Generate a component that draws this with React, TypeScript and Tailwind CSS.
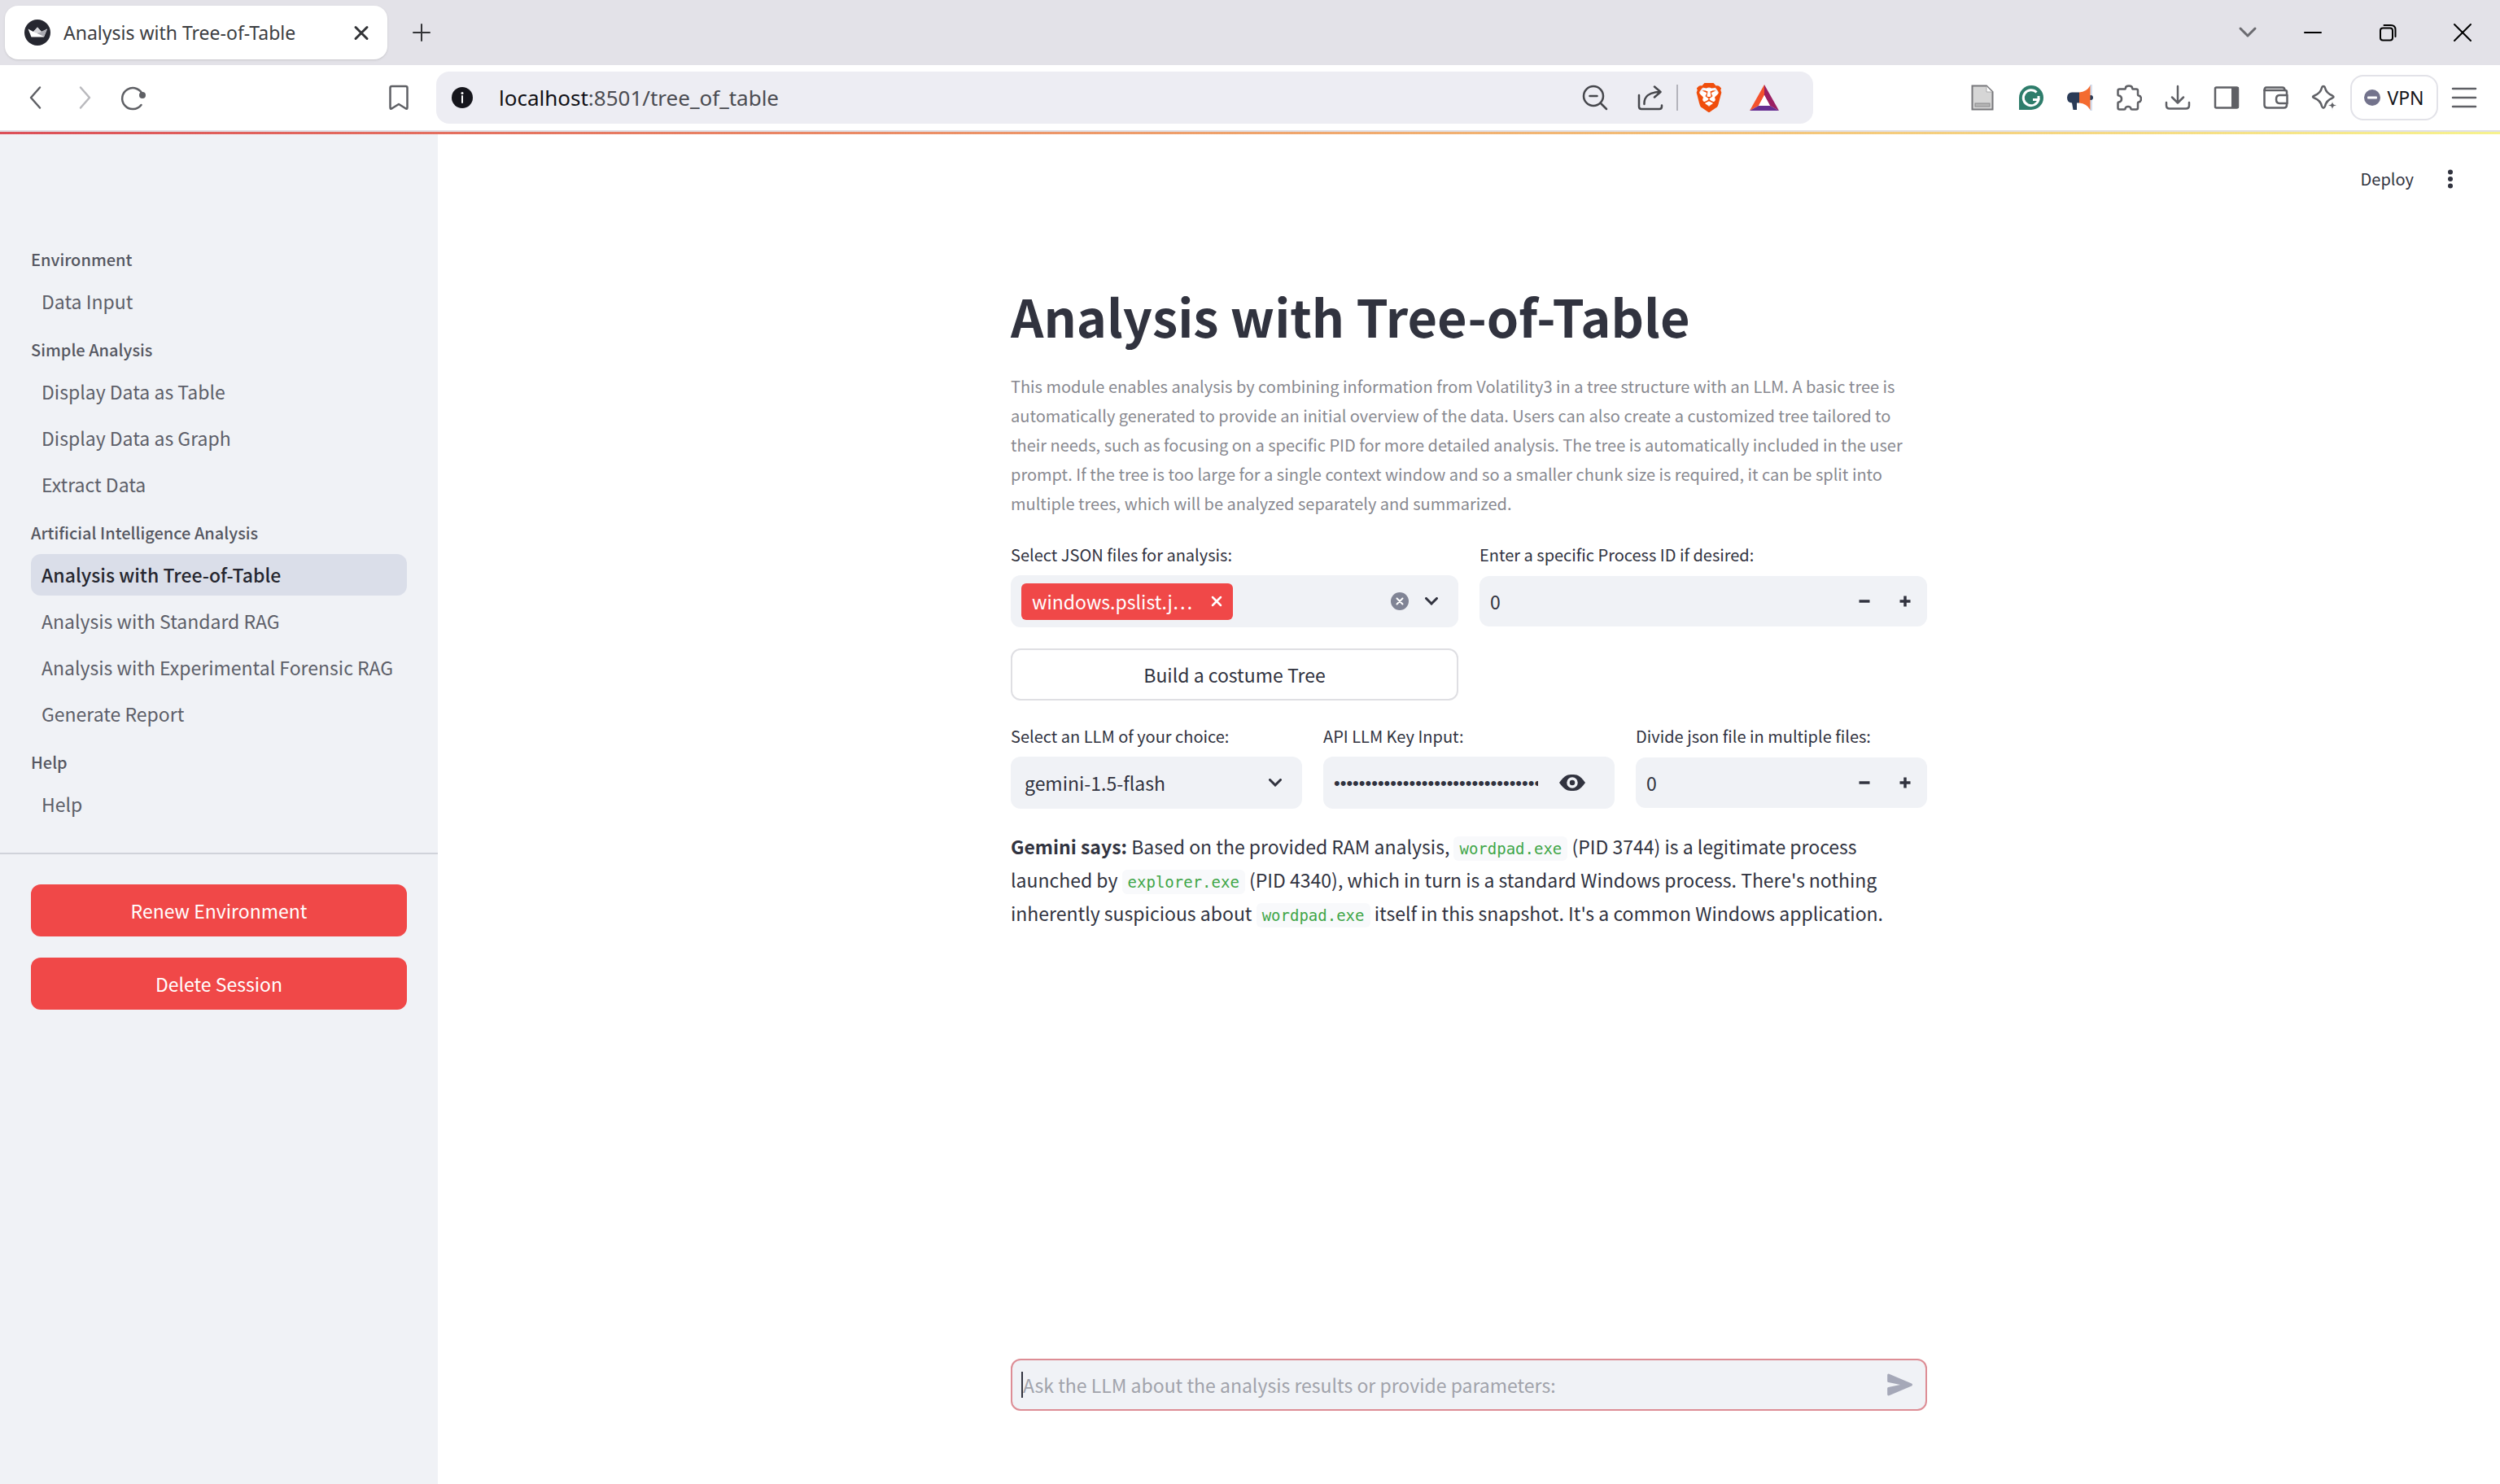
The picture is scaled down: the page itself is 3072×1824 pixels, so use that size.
import type { ReactNode } from "react";
import { SiBrave } from "react-icons/si";

const line = {
  fill: "none",
  stroke: "currentColor",
  strokeWidth: 2.5,
  strokeLinecap: "round" as const,
  strokeLinejoin: "round" as const,
};

function Icon({ children, className = "size-8" }: { children: ReactNode; className?: string }) {
  return (
    <svg viewBox="0 0 32 32" className={`${className} shrink-0`} aria-hidden="true">
      {children}
    </svg>
  );
}

function IconButton({ label, children, className = "" }: { label: string; children: ReactNode; className?: string }) {
  return (
    <button type="button" aria-label={label} className={`flex shrink-0 items-center justify-center ${className}`}>
      {children}
    </button>
  );
}

function TabStrip() {
  return (
    <div className="flex h-20 items-center bg-[#e3e2e8] pl-[6px]">
      <div className="flex h-[66px] w-[470px] items-center rounded-2xl bg-white pr-4 pl-6 shadow-sm">
        <svg viewBox="0 0 32 32" className="size-8 shrink-0" aria-hidden="true">
          <circle cx="16" cy="16" r="16" fill="#262730" />
          <path d="M4.500 11.500 L11 15 L16 9.500 L21 15 L28 11.500 L24 21.500 H8.500 Z" fill="#fff" />
          <path d="M16 9.500 L21 15 L14 16.500 L11 15 Z" fill="#d4d4d8" />
          <path d="M28 11.500 L21 15 L15 16.800 L24 21 Z" fill="#a9a9b0" />
        </svg>
        <span className="ml-4 flex-1 text-[23px] text-[#3c3e42]">Analysis with Tree-of-Table</span>
        <IconButton label="Close tab" className="size-8 text-[#333437]">
          <Icon>
            <path d="M9 9.500 L23 23.500 M23 9.500 L9 23.500" {...line} strokeWidth={3} />
          </Icon>
        </IconButton>
      </div>
      <IconButton label="New tab" className="ml-[26px] size-8 text-[#333437]">
        <Icon>
          <path d="M16 6 V26 M6 16 H26" {...line} strokeWidth={2} />
        </Icon>
      </IconButton>
      <div className="flex-1" />
      <div className="flex items-center gap-[60px] pr-[30px] text-black">
        <IconButton label="Search tabs" className="mr-[-12px] size-8 text-[#6b6b70]">
          <Icon>
            <path d="M7 11 L16 20 L25 11" {...line} strokeWidth={3} />
          </Icon>
        </IconButton>
        <IconButton label="Minimize" className="size-8">
          <Icon>
            <path d="M6 16 H26" {...line} strokeWidth={2} />
          </Icon>
        </IconButton>
        <IconButton label="Restore" className="size-8">
          <Icon>
            <rect x="7" y="10.500" width="15" height="15" rx="3" {...line} strokeWidth={2} />
            <path d="M11.500 7 H20 Q25.500 7 25.500 12.500 V21" {...line} strokeWidth={2} />
          </Icon>
        </IconButton>
        <IconButton label="Close" className="size-8">
          <Icon>
            <path d="M6 6 L26 26 M26 6 L6 26" {...line} strokeWidth={2} />
          </Icon>
        </IconButton>
      </div>
    </div>
  );
}

function Toolbar() {
  return (
    <div className="flex h-20 items-center bg-white pr-7 pl-7 text-[#5f6065]">
      <IconButton label="Back">
        <Icon>
          <path d="M21 3.500 L10 16 L21 28.500" {...line} />
        </Icon>
      </IconButton>
      <IconButton label="Forward" className="ml-7 text-[#b9b9bd]">
        <Icon>
          <path d="M11 3.500 L22 16 L11 28.500" {...line} />
        </Icon>
      </IconButton>
      <IconButton label="Reload" className="ml-7">
        <Icon>
          <path d="M27.500 13 A13 13 0 1 0 25.500 25" {...line} />
          <circle cx="27" cy="13" r="4" fill="currentColor" />
        </Icon>
      </IconButton>
      <div className="flex-1" />
      <IconButton label="Bookmark this page" className="mr-[30px]">
        <Icon>
          <path d="M5.500 4 Q5.500 2 7.500 2 H24.500 Q26.500 2 26.500 4 V28 Q26.500 31 24 29 L16 24 L8 29 Q5.500 31 5.500 28 Z" {...line} />
        </Icon>
      </IconButton>
      <div className="mr-[192px] flex h-16 w-[1692px] items-center rounded-2xl bg-[#ededf3] pr-[42px] pl-[19px] text-[#46474c]">
        <svg viewBox="0 0 26 26" className="size-[26px] shrink-0" aria-hidden="true">
          <circle cx="13" cy="13" r="13" fill="#16161c" />
          <circle cx="13" cy="7.500" r="1.500" fill="#fff" />
          <path d="M13 11 V19" stroke="#fff" strokeWidth="2" strokeLinecap="round" />
        </svg>
        <a href="#tree_of_table" className="ml-8 flex-1 text-[26px] text-[#4b4c52]">
          <span className="text-[#111116]">localhost</span>:8501/tree_of_table
        </a>
        <IconButton label="Zoom out">
          <Icon>
            <circle cx="14" cy="14" r="12" {...line} />
            <path d="M9.500 14 H18.500 M23 23 L30 30" {...line} />
          </Icon>
        </IconButton>
        <IconButton label="Share" className="ml-9">
          <Icon>
            <path d="M2 13 V27 Q2 30 5 30 H27 Q30 30 30 27 V25.500" {...line} />
            <path d="M8.500 24 C8 15 14 9 28 9 M21 2.500 L28.500 9 L21 15.500" {...line} />
          </Icon>
        </IconButton>
        <span className="ml-4 h-8 w-[2px] bg-[#b3b3bb]" />
        <IconButton label="Brave Shields" className="ml-5">
          <span className="relative flex">
            <span className="absolute inset-x-[6px] top-[7px] bottom-[9px] rounded-full bg-white" />
            <SiBrave className="relative size-9 text-[#f04e0c]" />
          </span>
        </IconButton>
        <IconButton label="Brave Rewards" className="ml-8">
          <svg viewBox="0 0 36 32" className="h-8 w-9" aria-hidden="true">
            <path d="M18 0 L0 32 L11 26 L18 13 Z" fill="#f4512c" />
            <path d="M18 0 L36 32 L25 26 L18 13 Z" fill="#9a1f62" />
            <path d="M0 32 H36 L25 26 H11 Z" fill="#662d91" />
            <path d="M18 13 L25 26 H11 Z" fill="#fff" />
          </svg>
        </IconButton>
      </div>
      <div className="flex items-center gap-7">
        <IconButton label="Page extension">
          <Icon>
            <path d="M3.500 1.500 H21 L28.500 9 V30.500 H3.500 Z" fill="#d6d6d6" stroke="#77777a" strokeWidth="2" />
            <path d="M21 2 V9 H28 Z" fill="#fff" stroke="#a9a9ab" />
            <rect x="7" y="23" width="18" height="4" fill="#b5b5b5" stroke="#8a8a8c" />
          </Icon>
        </IconButton>
        <IconButton label="Grammarly">
          <Icon>
            <path d="M1 31 V16 A15 15 0 1 1 16 31 Z" fill="#2e7d6b" />
            <path d="M22.500 9.500 A9.500 9.500 0 1 0 25 18.500 H18 M25 14 V18.500" fill="none" stroke="#fff" strokeWidth="3" />
          </Icon>
        </IconButton>
        <IconButton label="Megaphone extension">
          <Icon>
            <rect x="28" y="0" width="3" height="32" fill="#d6dfee" />
            <circle cx="29" cy="16" r="3" fill="#2a3b57" />
            <path d="M6 9.500 H15 V22.500 H12 V31 H7.500 L6 22.500 Q0 22 0 16 Q0 10 6 9.500 Z" fill="#2a3b57" />
            <path d="M15 9.500 Q24 9 28.500 1 V31 Q24 23 15 22.500 Z" fill="#f46b30" />
          </Icon>
        </IconButton>
        <IconButton label="Extensions">
          <Icon>
            <path
              d="M2.500 7.500 Q2.500 5.500 4.500 5.500 H10.500 Q12 5.500 11.800 4.500 Q12 1.500 16 1.500 Q20 1.500 20.200 4.500 Q20 5.500 21.500 5.500 H25 Q27 5.500 27 7.500 V12 Q27 13.500 28 13.500 Q31 14 31 17.500 Q31 21 28 21.500 Q27 21.500 27 23 V28.500 Q27 30.500 25 30.500 H20 Q18.500 30.500 18.500 29.500 Q18 27 15 27 Q12 27 11.500 29.500 Q11.500 30.500 10 30.500 H4.500 Q2.500 30.500 2.500 28.500 V23 Q2.500 21.500 3.500 21.500 Q7 21 7 17.500 Q7 14 3.500 13.500 Q2.500 13.500 2.500 12 Z"
              {...line}
            />
          </Icon>
        </IconButton>
        <IconButton label="Downloads">
          <Icon>
            <path d="M16 2 V22 M9 15.500 L16 22.500 L23 15.500 M2 22 V25.500 Q2 29.500 6 29.500 H26 Q30 29.500 30 25.500 V22" {...line} />
          </Icon>
        </IconButton>
        <IconButton label="Side panel">
          <Icon>
            <rect x="2" y="3.500" width="28" height="25" rx="1.500" {...line} />
            <rect x="22" y="3" width="9" height="26" fill="currentColor" />
          </Icon>
        </IconButton>
        <IconButton label="Wallet">
          <Icon>
            <path d="M30 13 V9 Q30 7 28 7 H2.500 V25 Q2.500 28.500 6 28.500 H26.500 Q30 28.500 30 25 V23" {...line} />
            <path d="M2.500 7 Q2.500 3.500 5 3.500 H24.500 Q27.500 3.500 27.500 7" {...line} />
            <path d="M30.500 13 H21 Q17 13 17 18 Q17 23 21 23 H30.500 Z" {...line} />
          </Icon>
        </IconButton>
        <IconButton label="Leo AI">
          <Icon>
            <path d="M15 2 Q16.500 2 17 4 Q18.500 10.500 26 13.500 Q29 15 26 16.500 Q18.500 19.500 17 26.500 Q15 31 13 26.500 Q11.500 19.500 4 16.500 Q0 15 4 13.500 Q11.500 10.500 13 4 Q13.500 2 15 2 Z" {...line} />
            <path d="M26 20 L27.500 24 L32 25.500 L27.500 27 L26 31.500 L24.500 27 L20 25.500 L24.500 24 Z" fill="currentColor" stroke="#fff" strokeWidth="1" />
          </Icon>
        </IconButton>
      </div>
      <button type="button" className="ml-4 flex h-14 w-[108px] items-center justify-center gap-2 rounded-2xl border-2 border-[#e2e2e8] text-[23px] text-[#15151a]">
        <svg viewBox="0 0 20 20" className="size-5" aria-hidden="true">
          <circle cx="10" cy="10" r="10" fill="#73738c" />
          <rect x="4" y="8.500" width="12" height="3" rx="1" fill="#fff" />
        </svg>
        VPN
      </button>
      <IconButton label="Menu" className="ml-4">
        <Icon>
          <path d="M2 5 H30 M2 16 H30 M2 27 H30" {...line} />
        </Icon>
      </IconButton>
    </div>
  );
}

const sections = [
  { title: "Environment", items: ["Data Input"] },
  { title: "Simple Analysis", items: ["Display Data as Table", "Display Data as Graph", "Extract Data"] },
  {
    title: "Artificial Intelligence Analysis",
    items: [
      "Analysis with Tree-of-Table",
      "Analysis with Standard RAG",
      "Analysis with Experimental Forensic RAG",
      "Generate Report",
    ],
  },
  { title: "Help", items: ["Help"] },
];

function Sidebar() {
  return (
    <aside className="w-[538px] shrink-0 bg-[#f0f2f6] pt-[140px]">
      <nav className="flex flex-col gap-5 px-[38px]">
        {sections.map((section) => (
          <section key={section.title}>
            <h2 className="mb-3 text-[20px] leading-7 font-medium text-[#555761]">{section.title}</h2>
            <ul className="flex flex-col gap-[6px]">
              {section.items.map((item) => (
                <li key={item}>
                  <a
                    href="#page"
                    aria-current={item === "Analysis with Tree-of-Table" ? "page" : undefined}
                    className="flex h-[51px] items-center rounded-xl px-[13px] text-[23px] whitespace-nowrap text-[#5d5f69] aria-[current=page]:bg-[#dadee9] aria-[current=page]:font-medium aria-[current=page]:text-[#262730]"
                  >
                    {item}
                  </a>
                </li>
              ))}
            </ul>
          </section>
        ))}
      </nav>
      <div className="mt-[34px] flex flex-col gap-[26px] border-t-2 border-[#d0d3da] px-[38px] pt-[37px] text-[23px] text-white">
        <button type="button" className="h-16 rounded-xl bg-[#f04848]">
          Renew Environment
        </button>
        <button type="button" className="h-16 rounded-xl bg-[#f04848]">
          Delete Session
        </button>
      </div>
    </aside>
  );
}

function Chevron() {
  return (
    <svg viewBox="0 0 16 10" className="h-[10px] w-4 shrink-0" aria-hidden="true">
      <path d="M1.500 1.500 L8 8 L14.500 1.500" fill="none" stroke="currentColor" strokeWidth="3" strokeLinecap="round" />
    </svg>
  );
}

function Label({ htmlFor, children }: { htmlFor: string; children: ReactNode }) {
  return (
    <label htmlFor={htmlFor} className="mb-[9px] block text-[20px] leading-8 whitespace-nowrap">
      {children}
    </label>
  );
}

function NumberField({ id, label }: { id: string; label: string }) {
  return (
    <div className="min-w-0">
      <Label htmlFor={id}>{label}</Label>
      <div className="mt-[10px] flex h-[62px] items-center rounded-xl bg-[#f0f2f6] pr-[17px] pl-[13px]">
        <input id={id} inputMode="numeric" defaultValue="0" className="w-0 flex-1 bg-transparent outline-none" />
        <div className="flex items-center gap-[30px]">
          <IconButton label={`Decrease: ${label}`} className="size-5">
            <svg viewBox="0 0 20 20" className="size-5" aria-hidden="true">
              <path d="M3.500 10 H16.500" stroke="currentColor" strokeWidth="3.500" />
            </svg>
          </IconButton>
          <IconButton label={`Increase: ${label}`} className="size-5">
            <svg viewBox="0 0 20 20" className="size-5" aria-hidden="true">
              <path d="M3.500 10 H16.500 M10 3.500 V16.500" stroke="currentColor" strokeWidth="3.500" />
            </svg>
          </IconButton>
        </div>
      </div>
    </div>
  );
}

function Code({ children }: { children: ReactNode }) {
  return (
    <code className="rounded-md bg-[#f8f9fb] px-[7px] py-1 font-['DejaVu_Sans_Mono',monospace] text-[19px] leading-none text-[#3fa648]">
      {children}
    </code>
  );
}

function Main() {
  return (
    <main className="flex min-w-0 flex-1 flex-col bg-white text-[23px] text-[#31333f]">
      <div className="flex h-[110px] items-center justify-end gap-[30px] pr-[46px]">
        <button type="button" className="text-[20px]">
          Deploy
        </button>
        <IconButton label="Main menu">
          <svg viewBox="0 0 30 30" className="size-[30px]" aria-hidden="true">
            <g fill="currentColor">
              <circle cx="15" cy="6.500" r="3" />
              <circle cx="15" cy="15" r="3" />
              <circle cx="15" cy="23.500" r="3" />
            </g>
          </svg>
        </IconButton>
      </div>
      <div className="mx-auto flex w-full max-w-[1126px] flex-1 flex-col">
        <h1 className="mt-[71px] text-[63px] leading-[84px] font-bold">Analysis with Tree-of-Table</h1>
        <p className="mt-[27px] text-[20px] leading-9 text-[#888990]">
          This module enables analysis by combining information from Volatility3 in a tree structure with an LLM. A basic tree is
          automatically generated to provide an initial overview of the data. Users can also create a customized tree tailored to
          their needs, such as focusing on a specific PID for more detailed analysis. The tree is automatically included in the user
          prompt. If the tree is too large for a single context window and so a smaller chunk size is required, it can be split into
          multiple trees, which will be analyzed separately and summarized.
        </p>

        <div className="mt-[29px] grid grid-cols-2 gap-[26px]">
          <div className="min-w-0">
            <Label htmlFor="files">Select JSON files for analysis:</Label>
            <div className="flex h-16 items-center rounded-xl bg-[#f0f2f6] pr-[25px] pl-[13px]">
              <span className="flex h-[45px] w-[260px] shrink-0 items-center justify-between rounded-md bg-[#f04848] px-[13px] text-white">
                <span className="truncate">windows.pslist.j…</span>
                <IconButton label="Remove windows.pslist.json">
                  <svg viewBox="0 0 14 14" className="size-[14px]" aria-hidden="true">
                    <path d="M2 2 L12 12 M12 2 L2 12" stroke="currentColor" strokeWidth="2.500" strokeLinecap="round" />
                  </svg>
                </IconButton>
              </span>
              <input id="files" role="combobox" aria-expanded="false" aria-controls="files" className="w-0 flex-1 bg-transparent outline-none" />
              <IconButton label="Clear all" className="mr-5">
                <svg viewBox="0 0 22 22" className="size-[22px]" aria-hidden="true">
                  <circle cx="11" cy="11" r="11" fill="#808495" />
                  <path d="M7.500 7.500 L14.500 14.500 M14.500 7.500 L7.500 14.500" stroke="#fff" strokeWidth="2" strokeLinecap="round" />
                </svg>
              </IconButton>
              <IconButton label="Open">
                <Chevron />
              </IconButton>
            </div>
          </div>
          <NumberField id="pid" label="Enter a specific Process ID if desired:" />
          <button type="button" className="h-16 rounded-xl border-2 border-[#dfdfe3] bg-white">
            Build a costume Tree
          </button>
        </div>

        <div className="mt-7 grid grid-cols-3 gap-[26px]">
          <div className="min-w-0">
            <Label htmlFor="llm">Select an LLM of your choice:</Label>
            <div className="relative">
              <select id="llm" className="h-16 w-full appearance-none rounded-xl bg-[#f0f2f6] pr-12 pl-[17px] outline-none">
                <option>gemini-1.5-flash</option>
              </select>
              <span className="pointer-events-none absolute inset-y-0 right-[25px] flex items-center">
                <Chevron />
              </span>
            </div>
          </div>
          <div className="min-w-0">
            <Label htmlFor="key">API LLM Key Input:</Label>
            <div className="flex h-16 items-center rounded-xl bg-[#f0f2f6] pr-9 pl-[13px]">
              <input
                id="key"
                type="password"
                defaultValue="0000000000000000000000000000000000000"
                className="mr-[26px] w-0 flex-1 bg-transparent font-['Liberation_Sans',sans-serif] text-[22px] outline-none"
              />
              <IconButton label="Show key">
                <svg viewBox="0 0 32 24" className="h-6 w-8" aria-hidden="true">
                  <path d="M0 12 C7 2 11 2 16 2 C21 2 25 2 32 12 C25 22 21 22 16 22 C11 22 7 22 0 12 Z" fill="currentColor" />
                  <circle cx="16" cy="12" r="5" fill="none" stroke="#f0f2f6" strokeWidth="3.500" />
                </svg>
              </IconButton>
            </div>
          </div>
          <NumberField id="split" label="Divide json file in multiple files:" />
        </div>

        <p className="mt-[26px] leading-[41px]">
          <strong className="font-bold">Gemini says:</strong> Based on the provided RAM analysis, <Code>wordpad.exe</Code> (PID 3744)
          is a legitimate process launched by <Code>explorer.exe</Code> (PID 4340), which in turn is a standard Windows process.
          There's nothing inherently suspicious about <Code>wordpad.exe</Code> itself in this snapshot. It's a common Windows
          application.
        </p>

        <form className="mt-auto mb-[90px] flex h-16 items-center rounded-xl border-2 border-[#dd8d95] bg-[#f0f2f6] pr-3 pl-[11px]">
          <span className="h-8 w-[2px] bg-[#31333f]" />
          <input
            aria-label="Ask the LLM"
            placeholder="Ask the LLM about the analysis results or provide parameters:"
            className="w-0 flex-1 bg-transparent outline-none placeholder:text-[#a1a3ab]"
          />
          <IconButton label="Send" className="text-[#a5a8b8]">
            <svg viewBox="0 0 24 24" className="size-[38px]" aria-hidden="true">
              <path
                d="M3.400 20.400 L20.850 12.920 a1 1 0 0 0 0-1.840 L3.400 3.600 a.993.993 0 0 0-1.390.910 L2 9.120 c0 .5.37.930.870.990 L12 12 L2.870 13.880 c-.5.07-.87.5-.87 1 l.01 4.610 c0 .710.730 1.200 1.390.910 Z"
                fill="currentColor"
              />
            </svg>
          </IconButton>
        </form>
      </div>
    </main>
  );
}

export default function App() {
  return (
    <div className="flex min-h-screen flex-col bg-white font-['Noto_Sans_CJK_SC',sans-serif]">
      <header className="font-['Noto_Sans',sans-serif]">
        <TabStrip />
        <Toolbar />
        <div className="h-[5px] border-t-2 border-[#e0e0e6] bg-linear-to-r from-[#dc4f58] via-[#efa36c] to-[#f6f28e]" />
      </header>
      <div className="flex flex-1">
        <Sidebar />
        <Main />
      </div>
    </div>
  );
}
